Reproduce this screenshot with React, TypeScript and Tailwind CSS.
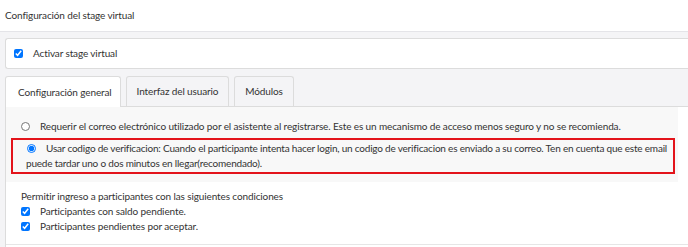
import React from "react";

export default function App() {
  const font = { fontFamily: "Lato, 'Open Sans', sans-serif" };
  return (
    <div className="w-[688px] h-[247px] overflow-hidden bg-[#f4f4f6] text-[#333] text-[10px] tracking-[-0.12px]" style={font}>
      <div className="h-[32px] bg-white border-b border-[#e4e4e8] flex items-center pl-[5px]">
        <span>Configuración del stage virtual</span>
      </div>
      <div className="pl-[5px] pt-[6px]">
        <div className="h-[31px] bg-white border border-r-0 border-[#dcdcdc] rounded-l-[3px] flex items-center pl-[8px]">
          <input type="checkbox" defaultChecked className="w-[9px] h-[9px] m-0" />
          <span className="ml-[10px]">Activar stage virtual</span>
        </div>
        <div className="flex gap-[5px] mt-[7px] h-[30px]">
          <div className="w-[116px] bg-white border border-b-0 border-[#dcdcdc] rounded-t-[3px] flex items-center pl-[12px] relative z-10 h-[31px]">
            Configuración general
          </div>
          <div className="w-[103px] border border-b-0 border-[#dcdcdc] rounded-t-[3px] flex items-center justify-center">
            Interfaz del usuario
          </div>
          <div className="w-[60px] border border-b-0 border-[#dcdcdc] rounded-t-[3px] flex items-center justify-center">
            Módulos
          </div>
        </div>
        <div className="border-t border-l border-[#dcdcdc] bg-white h-[200px]">
          <div className="bg-[#f8f8f8] w-[672px] pt-[9px] pb-[8px]">
            <div className="flex items-center h-[20px] pl-[15px]">
              <input type="radio" name="r" className="w-[9px] h-[9px] m-0" />
              <span className="ml-[10px]">Requerir el correo electrónico utilizado por el asistente al registrarse. Este es un mecanismo de acceso menos seguro y no se recomienda.</span>
            </div>
            <div className="ml-[5px] mt-[2px] w-[664px] border-2 border-[#e3141b] pl-[13px] pr-[2px] py-[1px] leading-[15px] tracking-[-0.2px]">
              <div className="whitespace-nowrap">
                <input type="radio" name="r" defaultChecked className="w-[9px] h-[9px] m-0 mr-[10px] ml-[1px] align-[-1px]" />
                Usar codigo de verificacion: Cuando el participante intenta hacer login, un codigo de verificacion es enviado a su correo. Ten en cuenta que este email
              </div>
              <div>puede tardar uno o dos minutos en llegar(recomendado).</div>
            </div>
          </div>
          <div className="pl-[15px] pt-[7px] pb-[10px] border-b border-[#e6e6e6]">
            <div className="h-[15px] flex items-center">Permitir ingreso a participantes con las siguientes condiciones</div>
            <div className="h-[15px] flex items-center">
              <input type="checkbox" defaultChecked className="w-[9px] h-[9px] m-0" />
              <span className="ml-[10px]">Participantes con saldo pendiente.</span>
            </div>
            <div className="h-[15px] flex items-center">
              <input type="checkbox" defaultChecked className="w-[9px] h-[9px] m-0" />
              <span className="ml-[10px]">Participantes pendientes por aceptar.</span>
            </div>
          </div>
        </div>
      </div>
    </div>
  );
}
